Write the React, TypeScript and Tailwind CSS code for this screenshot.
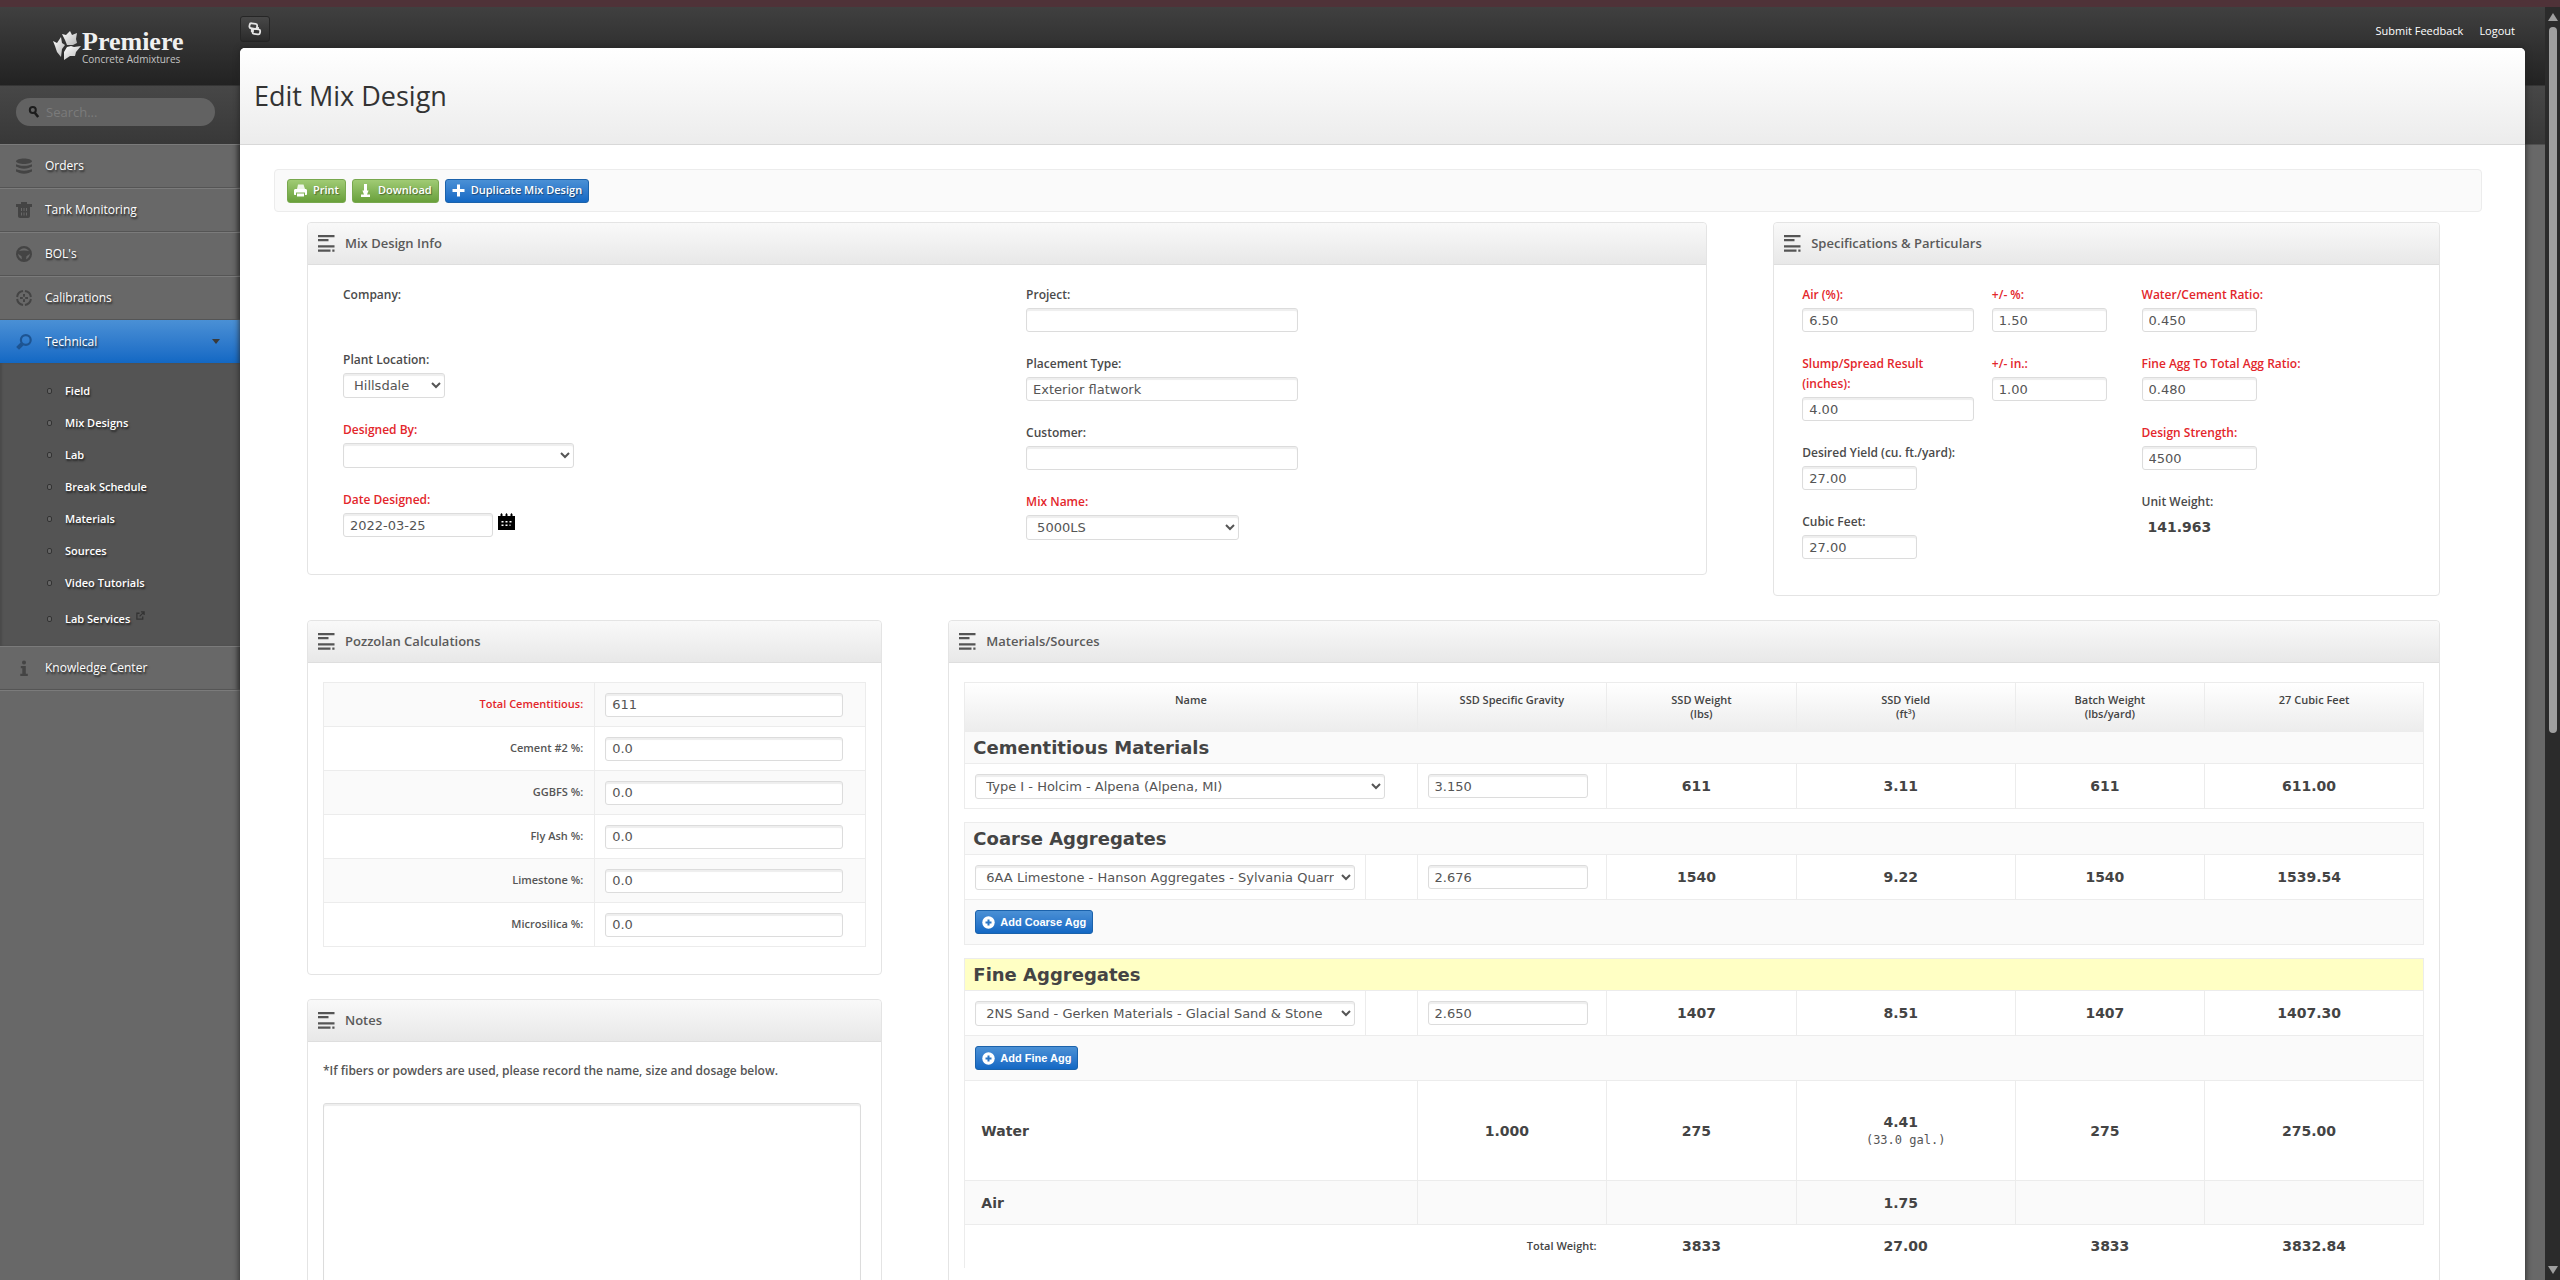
import { useId, type ReactNode } from "react";
import clsx from "clsx";

const field =
  "rounded-[3px] border border-[#dcdcdc] bg-white font-['DejaVu_Sans',Verdana,sans-serif] text-[13px] leading-4 text-[#555] shadow-[inset_0_2px_1px_#eee] outline-none focus:border-[#8ab4e0]";

/* ---------- icons ---------- */

function StackIcon() {
  return (
    <svg viewBox="0 0 16 16" className="h-4 w-4" fill="currentColor">
      <path d="M8 .5c4 0 8 1.200 8 2.700S12 6 8 6 0 4.700 0 3.200 4 .5 8 .5z" />
      <path d="M0 6.300l3 .9c3 .8 7 .8 10 0l3-.9v2.200l-3.500 1.600c-2.800.9-6.200.9-9 0L0 8.500z" />
      <path d="M0 11.200l3 .9c3 .8 7 .8 10 0l3-.9v2.200l-3.500 1.600c-2.800.9-6.200.9-9 0L0 13.400z" />
    </svg>
  );
}

function TankIcon() {
  return (
    <svg viewBox="0 0 16 16" className="h-4 w-4" fill="currentColor" fillRule="evenodd">
      <path d="M5 0h6v2h5v3h-2v9c0 1.200-.8 2-2 2H4c-1.200 0-2-.8-2-2V5H0V2h5zM5 6v3h1V6zm2.500 0v3h1V6zM10 6v3h1V6zM5 10.500v3h1v-3zm2.500 0v3h1v-3zm2.500 0v3h1v-3z" />
    </svg>
  );
}

function WheelIcon() {
  return (
    <svg viewBox="0 0 16 16" className="h-4 w-4" fill="none" stroke="currentColor">
      <circle cx="8" cy="8" r="6.900" strokeWidth="2.200" />
      <path d="M1.500 5.500c4-1.500 9-1.500 13 0l-.8 2.500-3.200 2.200L9.800 15H6.200l-.7-4.800L2.300 8z" fill="currentColor" stroke="none" />
    </svg>
  );
}

function TargetIcon() {
  return (
    <svg viewBox="0 0 16 16" className="h-4 w-4" fill="none" stroke="currentColor">
      <path
        d="M9 1.100a7 7 0 0 1 5.900 5.900M14.900 9a7 7 0 0 1-5.900 5.900M7 14.900a7 7 0 0 1-5.900-5.900M1.100 7a7 7 0 0 1 5.900-5.900"
        strokeWidth="2"
      />
      <path d="M8 4v2.800M8 9.200V12M4 8h2.800M9.200 8H12" strokeWidth="2" />
    </svg>
  );
}

function LensIcon() {
  return (
    <svg viewBox="0 0 16 16" className="h-4 w-4" fill="none" stroke="currentColor">
      <circle cx="9.800" cy="6" r="4.900" strokeWidth="2.200" />
      <path d="M6 10l-4.400 4.400" strokeWidth="4" />
    </svg>
  );
}

function InfoIcon() {
  return (
    <svg viewBox="0 0 16 16" className="h-4 w-4" fill="currentColor">
      <circle cx="8" cy="2.500" r="2" />
      <path d="M4.800 6h5v7.800h2V16H4.300v-2.200h2V8.200H4.800z" />
    </svg>
  );
}

function SearchIcon() {
  return (
    <svg viewBox="0 0 12 12" className="h-3 w-3" fill="none" stroke="#1c1c1c">
      <circle cx="4.800" cy="4" r="3" strokeWidth="2" />
      <path d="M6.800 6.800l3.400 4.200" strokeWidth="2.600" />
    </svg>
  );
}

function LinesIcon() {
  return (
    <svg viewBox="0 0 17 17" className="h-[17px] w-[17px]" fill="#555">
      <path d="M0 0h16.500v2.200H0zM0 4h10.500v2.200H0zM0 10.200h16.500v2.200H0zM0 14.500h12.500v2.200H0zM14.300 14.500h2.200v2.200h-2.200z" />
    </svg>
  );
}

function CalendarIcon() {
  return (
    <svg viewBox="0 0 17 17" className="h-[17px] w-[17px]" fillRule="evenodd">
      <path d="M0 3h2.500V1.200L3.500 0l1 1.200V3h3V1.200L8.500 0l1 1.200V3h3V1.200L13.500 0l1 1.200V3H17v14H0zM3.500 8v1.500h2V8zm4 0v1.500h2V8zm4 0v1.500h2V8zm-8 3.500V13h2v-1.500zm4 0V13h2v-1.500zm4 0V13h1v-1.500z" />
    </svg>
  );
}

function PrintIcon() {
  return (
    <svg viewBox="0 0 13 13" className="h-[13px] w-[13px]" fill="currentColor">
      <path d="M3 5l1-4.500h5.500L11 5z" fillOpacity=".85" />
      <path d="M1.500 5h10c.8 0 1.500.6 1.500 1.400V10c0 .6-.4 1-1 1h-1V8.500H2V11H1c-.6 0-1-.4-1-1V6.400C0 5.600.7 5 1.500 5z" />
      <path d="M3 9.500h7v3H3z" />
    </svg>
  );
}

function DownloadIcon() {
  return (
    <svg viewBox="0 0 13 13" className="h-[13px] w-[13px]" fill="currentColor">
      <path d="M5 0h3v6.500h1.600L8 10.500h3V13H2v-2.500h3L3.400 6.500H5z" />
    </svg>
  );
}

function PlusIcon() {
  return (
    <svg viewBox="0 0 13 13" className="h-[13px] w-[13px]" fill="currentColor">
      <path d="M5 .5h3V5h4.500v3H8v4.500H5V8H.5V5H5z" />
    </svg>
  );
}

function PlusCircleIcon() {
  return (
    <svg viewBox="0 0 13 13" className="h-[13px] w-[13px]">
      <circle cx="6.500" cy="6.500" r="6.200" fill="currentColor" />
      <path d="M6.500 3.500v6M3.500 6.500h6" stroke="#2a75c4" strokeWidth="2" />
    </svg>
  );
}

function ChainIcon() {
  return (
    <svg viewBox="0 0 14 14" className="h-[14px] w-[14px]" fill="none" stroke="#e4e4e4" strokeWidth="1.800">
      <rect x="1.500" y="1.500" width="7.600" height="5" rx="1.800" transform="rotate(8 5 4)" />
      <rect x="4.600" y="7.200" width="7.600" height="5" rx="1.800" transform="rotate(8 9 9)" />
      <path d="M3.800 6v3h2M10 5v3" />
    </svg>
  );
}

function ExternalIcon() {
  return (
    <svg viewBox="0 0 10 10" className="h-[9px] w-[9px]" fill="none" stroke="#333" strokeWidth="1.400">
      <path d="M4 2.500H1v6.500h6.500V6" />
      <path d="M4 6l4.500-4.500M5.500 1H9v3.500" />
    </svg>
  );
}

function Logo() {
  return (
    <a href="#" className="flex h-[78px] items-start gap-px pt-[23px] pl-[53px] text-[#f0f0f0]">
      <svg viewBox="0 0 28 32" className="h-8 w-7">
        <defs>
          <linearGradient id="leaf" x1="0" y1="0" x2="1" y2="1">
            <stop offset="0" stopColor="#fff" />
            <stop offset="1" stopColor="#b5b5b5" />
          </linearGradient>
        </defs>
        <g fill="url(#leaf)">
          <path d="M9 4l4 1 4-4 2 4 5-2-1 6 1 4-4 2-6 0-2-5z" />
          <path d="M0 11l4 2 4-6 1 6 3 2-3 4-1 8-4-5-2-6z" />
          <path d="M14 17l4-1 3 1 7-1-5 6-1 4-5 0-6 4 0-8z" />
        </g>
      </svg>
      <span className="flex flex-col">
        <span className="font-['Liberation_Serif',serif] text-[26px] leading-6 font-bold">Premiere</span>
        <span className="text-[10px] leading-[10px] text-[#c4c4c4]">Concrete Admixtures</span>
      </span>
    </a>
  );
}

/* ---------- sidebar ---------- */

const mainNav = [
  { label: "Orders", icon: <StackIcon /> },
  { label: "Tank Monitoring", icon: <TankIcon /> },
  { label: "BOL's", icon: <WheelIcon /> },
  { label: "Calibrations", icon: <TargetIcon /> },
];

const technicalNav = ["Field", "Mix Designs", "Lab", "Break Schedule", "Materials", "Sources", "Video Tutorials"];

const navText = "text-xs font-medium text-white [text-shadow:1px_2px_2px_#222]";

function NavItem({ label, icon }: { label: string; icon: ReactNode }) {
  return (
    <a href="#" className="flex h-11 items-center gap-[13px] border-t border-b border-t-[#7b7b7b] border-b-[#555] pl-4 text-[#444]">
      {icon}
      <span className={navText}>{label}</span>
    </a>
  );
}

function SubItem({ label, external = false }: { label: string; external?: boolean }) {
  return (
    <a
      href="#"
      className={clsx(
        "flex items-center gap-[13px] pl-[47px] text-[11px] font-semibold text-white [text-shadow:1px_2px_2px_#222]",
        external ? "h-10" : "h-8",
      )}
    >
      <span className="h-[6px] w-[5px] rounded-[2px] border border-[#333] bg-[#666]" />
      <span className="flex gap-[6px]">
        {label}
        {external && <ExternalIcon />}
      </span>
    </a>
  );
}

function Sidebar() {
  return (
    <aside className="w-60 shrink-0">
      <Logo />
      <div className="h-[59px] px-4 pt-[13px]">
        <div className="relative mr-[9px]">
          <span className="absolute top-2 left-3">
            <SearchIcon />
          </span>
          <input
            type="text"
            aria-label="Search"
            placeholder="Search..."
            className="h-7 w-full rounded-full bg-[#626262] pl-[30px] text-[13px] text-white outline-none placeholder:text-[#7b7b7b]"
          />
        </div>
      </div>
      <nav className="shadow-[inset_-6px_0_6px_-5px_#333]">
        {mainNav.map((item) => (
          <NavItem key={item.label} {...item} />
        ))}
        <a href="#" className="flex h-[43px] items-center gap-[13px] bg-linear-to-b from-[#4a90d5] to-[#1268c4] pl-4 text-[#1d5492]">
          <LensIcon />
          <span className={navText}>Technical</span>
          <svg viewBox="0 0 8 5" className="mr-5 ml-auto h-[5px] w-2" fill="#3a3a3a">
            <path d="M0 0h8L4 5z" />
          </svg>
        </a>
        <div className="bg-[#545454] pt-3 pb-[7px] shadow-[inset_2px_0_2px_#4a4a4a]">
          {technicalNav.map((label) => (
            <SubItem key={label} label={label} />
          ))}
          <SubItem label="Lab Services" external />
        </div>
        <NavItem label="Knowledge Center" icon={<InfoIcon />} />
        <div className="border-t border-[#7b7b7b]" />
      </nav>
    </aside>
  );
}

/* ---------- form pieces ---------- */

function Panel({ title, children }: { title: string; children: ReactNode }) {
  return (
    <section className="rounded-[4px] border border-[#e4e4e4] bg-white">
      <h2 className="flex h-[42px] items-center gap-[10px] rounded-t-[4px] border-b border-[#dedede] bg-linear-to-b from-[#f9f9f9] to-[#e8e8e8] pl-[10px] text-[13px] font-semibold text-[#5a5a5a]">
        <LinesIcon />
        {title}
      </h2>
      {children}
    </section>
  );
}

type FieldProps = { label: string; value?: string; width?: string; required?: boolean; after?: ReactNode };

function FieldLabel({ id, label, required }: { id: string; label: string; required?: boolean }) {
  return (
    <label htmlFor={id} className={clsx("text-xs leading-5 font-semibold", required ? "text-[#e3262b]" : "text-[#4a4a4a]")}>
      {label}
    </label>
  );
}

function TextField({ label, value = "", width = "w-[115px]", required, after }: FieldProps) {
  const id = useId();
  return (
    <div className="flex flex-col gap-[3px]">
      <FieldLabel id={id} label={label} required={required} />
      <div className="flex gap-[5px]">
        <input id={id} type="text" defaultValue={value} className={clsx(field, "h-6 px-[6px]", width)} />
        {after}
      </div>
    </div>
  );
}

function SelectField({ label, value = "", width, required }: FieldProps) {
  const id = useId();
  return (
    <div className="flex flex-col gap-[3px]">
      <FieldLabel id={id} label={label} required={required} />
      <select id={id} defaultValue={value} className={clsx(field, "h-[25px] pl-[6px]", width)}>
        <option>{value}</option>
      </select>
    </div>
  );
}

function MixDesignInfo() {
  return (
    <Panel title="Mix Design Info">
      <div className="grid grid-cols-2 gap-x-[38px] px-[35px] pt-5 pb-[34px]">
        <div className="flex flex-col gap-[22px]">
          <div className="h-[43px] text-xs leading-5 font-semibold text-[#4a4a4a]">Company:</div>
          <SelectField label="Plant Location:" value="Hillsdale" width="w-[102px]" />
          <SelectField label="Designed By:" width="w-[231px]" required />
          <TextField label="Date Designed:" value="2022-03-25" width="w-[150px]" required after={<CalendarIcon />} />
        </div>
        <div className="flex flex-col gap-[22px]">
          <TextField label="Project:" width="w-[272px]" />
          <TextField label="Placement Type:" value="Exterior flatwork" width="w-[272px]" />
          <TextField label="Customer:" width="w-[272px]" />
          <SelectField label="Mix Name:" value="5000LS" width="w-[213px]" required />
        </div>
      </div>
    </Panel>
  );
}

function Specifications() {
  return (
    <Panel title="Specifications & Particulars">
      <div className="grid grid-cols-[19fr_15fr_28fr] pt-5 pr-[18px] pb-9 pl-7">
        <div className="flex flex-col gap-[22px] pr-[18px]">
          <TextField label="Air (%):" value="6.50" width="w-full" required />
          <TextField label="Slump/Spread Result (inches):" value="4.00" width="w-full" required />
          <TextField label="Desired Yield (cu. ft./yard):" value="27.00" />
          <TextField label="Cubic Feet:" value="27.00" />
        </div>
        <div className="flex flex-col gap-[22px]">
          <TextField label="+/- %:" value="1.50" required />
          <TextField label="+/- in.:" value="1.00" required />
        </div>
        <div className="flex flex-col gap-[22px]">
          <TextField label="Water/Cement Ratio:" value="0.450" required />
          <TextField label="Fine Agg To Total Agg Ratio:" value="0.480" required />
          <TextField label="Design Strength:" value="4500" required />
          <div className="flex flex-col gap-[5px] text-[#444]">
            <span className="text-xs leading-5 font-semibold text-[#4a4a4a]">Unit Weight:</span>
            <span className="pl-[6px] font-['DejaVu_Sans',Verdana,sans-serif] text-sm font-bold">141.963</span>
          </div>
        </div>
      </div>
    </Panel>
  );
}

const pozzolans = [
  { label: "Total Cementitious:", value: "611", required: true },
  { label: "Cement #2 %:", value: "0.0" },
  { label: "GGBFS %:", value: "0.0" },
  { label: "Fly Ash %:", value: "0.0" },
  { label: "Limestone %:", value: "0.0" },
  { label: "Microsilica %:", value: "0.0" },
];

function Pozzolan() {
  const id = useId();
  return (
    <Panel title="Pozzolan Calculations">
      <div className="px-[15px] pt-[19px] pb-[27px]">
        <table className="w-full table-fixed border-collapse">
          <tbody>
            {pozzolans.map((row, i) => (
              <tr key={row.label} className="h-11 border border-[#ececec] odd:bg-[#fafafa]">
                <th scope="row" className="border-r border-[#ececec] pr-[11px] text-right text-[11px] font-semibold">
                  <label htmlFor={`${id}-${i}`} className={row.required ? "text-[#e3262b]" : "text-[#555]"}>
                    {row.label}
                  </label>
                </th>
                <td className="px-[10px]">
                  <input id={`${id}-${i}`} type="text" defaultValue={row.value} className={clsx(field, "block h-6 w-[95%] px-[6px]")} />
                </td>
              </tr>
            ))}
          </tbody>
        </table>
      </div>
    </Panel>
  );
}

function Notes() {
  return (
    <Panel title="Notes">
      <div className="px-[15px] pt-[19px] pb-7">
        <label htmlFor="notes" className="block text-xs leading-5 font-semibold text-[#555]">
          *If fibers or powders are used, please record the name, size and dosage below.
        </label>
        <textarea id="notes" rows={14} className={clsx(field, "mt-[22px] block w-[99%] p-2")} />
      </div>
    </Panel>
  );
}

/* ---------- materials table ---------- */

const cell = "border border-[#ececec] px-[10px]";
const bold = "font-['DejaVu_Sans',Verdana,sans-serif] text-sm font-bold text-[#444]";

function Num({ children }: { children?: ReactNode }) {
  return <td className={clsx(cell, bold, "pr-5 text-center")}>{children}</td>;
}

function GroupHeading({ children, highlight = false }: { children: ReactNode; highlight?: boolean }) {
  return (
    <tr className={clsx("h-8", highlight ? "bg-[#ffffc4]" : "bg-[#fafafa]")}>
      <th
        scope="colgroup"
        colSpan={7}
        className="border border-[#ececec] px-2 text-left font-['DejaVu_Sans',Verdana,sans-serif] text-lg leading-6 text-[#444]"
      >
        {children}
      </th>
    </tr>
  );
}

function Spacer() {
  return (
    <tr className="h-[14px]">
      <td colSpan={7} />
    </tr>
  );
}

type MaterialProps = { name: string; gravity: string; numbers: string[]; removable?: boolean };

function MaterialRow({ name, gravity, numbers, removable }: MaterialProps) {
  return (
    <tr className="h-[45px]">
      <td className={cell} colSpan={removable ? 1 : 2}>
        <select
          aria-label="Material"
          defaultValue={name}
          className={clsx(field, "block h-[25px] pr-1 pl-[6px]", removable ? "w-full" : "w-[95%]")}
        >
          <option>{name}</option>
        </select>
      </td>
      {removable && <td className={cell} />}
      <td className={cell}>
        <input type="text" aria-label="SSD Specific Gravity" defaultValue={gravity} className={clsx(field, "block h-6 w-[95%] px-[6px]")} />
      </td>
      {numbers.map((n, i) => (
        <Num key={i}>{n}</Num>
      ))}
    </tr>
  );
}

function AddRow({ label }: { label: string }) {
  return (
    <tr className="h-[45px] bg-[#fafafa]">
      <td className={cell} colSpan={7}>
        <button
          type="button"
          className="flex h-6 items-center gap-[5px] rounded-[3px] border border-[#1b62ab] bg-linear-to-b from-[#4a90d5] to-[#1268c4] px-[6px] font-['Liberation_Sans',Arial,sans-serif] text-[11px] font-bold text-white"
        >
          <PlusCircleIcon />
          {label}
        </button>
      </td>
    </tr>
  );
}

const headings: [string, string?][] = [
  ["SSD Specific Gravity"],
  ["SSD Weight", "(lbs)"],
  ["SSD Yield", "(ft³)"],
  ["Batch Weight", "(lbs/yard)"],
  ["27 Cubic Feet"],
];

function Materials() {
  return (
    <Panel title="Materials/Sources">
      <div className="px-[15px] pt-[19px] pb-7">
        <table className="w-full table-fixed border-collapse">
          <colgroup>
            <col className="w-[27.5%]" />
            <col className="w-[3.5%]" />
            <col className="w-[13%]" />
            <col className="w-[13%]" />
            <col className="w-[15%]" />
            <col className="w-[13%]" />
            <col className="w-[15%]" />
          </colgroup>
          <thead>
            <tr className="h-[49px] bg-linear-to-b from-white to-[#ececec] text-[11px] leading-[14px] text-[#444]">
              <th colSpan={2} className="border border-[#ececec] pt-[10px] align-top font-semibold">
                Name
              </th>
              {headings.map(([top, bottom]) => (
                <th key={top} className="border border-[#ececec] pt-[10px] align-top font-semibold">
                  {top}
                  {bottom && <div>{bottom}</div>}
                </th>
              ))}
            </tr>
          </thead>
          <tbody>
            <GroupHeading>Cementitious Materials</GroupHeading>
            <MaterialRow name="Type I - Holcim - Alpena (Alpena, MI)" gravity="3.150" numbers={["611", "3.11", "611", "611.00"]} />
            <Spacer />
            <GroupHeading>Coarse Aggregates</GroupHeading>
            <MaterialRow
              name="6AA Limestone - Hanson Aggregates - Sylvania Quarry"
              gravity="2.676"
              numbers={["1540", "9.22", "1540", "1539.54"]}
              removable
            />
            <AddRow label="Add Coarse Agg" />
            <Spacer />
            <GroupHeading highlight>Fine Aggregates</GroupHeading>
            <MaterialRow
              name="2NS Sand - Gerken Materials - Glacial Sand & Stone"
              gravity="2.650"
              numbers={["1407", "8.51", "1407", "1407.30"]}
              removable
            />
            <AddRow label="Add Fine Agg" />
            <tr className="h-[100px]">
              <td colSpan={2} className={clsx(cell, bold, "pl-4")}>
                Water
              </td>
              <Num>1.000</Num>
              <Num>275</Num>
              <td className={cell}>
                <div className={clsx(bold, "pr-[10px] text-center leading-[18px]")}>4.41</div>
                <div className="text-center font-['DejaVu_Sans_Mono',monospace] text-xs leading-[18px] text-[#555]">(33.0 gal.)</div>
              </td>
              <Num>275</Num>
              <Num>275.00</Num>
            </tr>
            <tr className="h-11 bg-[#fafafa]">
              <td colSpan={2} className={clsx(cell, bold, "pl-4")}>
                Air
              </td>
              <Num />
              <Num />
              <Num>1.75</Num>
              <Num />
              <Num />
            </tr>
            <tr className="h-[43px]">
              <td colSpan={3} className="border-l border-[#ececec] pr-[10px] text-right text-[11px] font-semibold text-[#444]">
                Total Weight:
              </td>
              {["3833", "27.00", "3833", "3832.84"].map((n, i) => (
                <td key={i} className={clsx(bold, "text-center")}>
                  {n}
                </td>
              ))}
            </tr>
          </tbody>
        </table>
      </div>
    </Panel>
  );
}

/* ---------- page ---------- */

function ActionButton({ icon, children, blue = false }: { icon: ReactNode; children: ReactNode; blue?: boolean }) {
  return (
    <button
      type="button"
      className={clsx(
        "flex h-6 items-center gap-[6px] rounded-[3px] border bg-linear-to-b px-[6px] text-[11px] font-semibold text-white [text-shadow:1px_1px_1px_#0006]",
        blue ? "border-[#1b62ab] from-[#4a90d5] to-[#1268c4]" : "border-[#78a84e] from-[#a0cb74] to-[#69a03a]",
      )}
    >
      {icon}
      {children}
    </button>
  );
}

export default function App() {
  return (
    <div className="flex h-screen flex-col overflow-hidden font-['Open_Sans',sans-serif]">
      <div className="h-[7px] shrink-0 bg-[#4f3238]" />
      <div className="flex min-h-0 flex-1">
        <div className="flex min-w-0 flex-1 overflow-hidden bg-[linear-gradient(#404040_0,#222_78px,#474747_79px,#383838_137px,#686868_138px)]">
          <Sidebar />
          <div className="mr-5 flex min-w-0 flex-1 flex-col">
            <header className="flex h-[41px] shrink-0 items-start justify-between pt-[9px]">
              <button
                type="button"
                aria-label="Links"
                className="flex h-[26px] w-[30px] items-center justify-center rounded-[3px] border border-[#262626] bg-linear-to-b from-[#484848] to-[#2b2b2b]"
              >
                <ChainIcon />
              </button>
              <div className="flex gap-4 pt-[7px] pr-[10px] text-[11px] leading-4 font-medium text-white">
                <a href="#">Submit Feedback</a>
                <a href="#">Logout</a>
              </div>
            </header>
            <main className="shrink-0 rounded-t-[5px] bg-white shadow-[0_0_6px_#222]">
              <div className="flex h-[97px] items-center rounded-t-[5px] border-b border-[#d8d8d8] bg-linear-to-b from-white to-[#ececec] pl-[14px]">
                <h1 className="text-[27px] text-[#333]">Edit Mix Design</h1>
              </div>
              <div className="pt-6 pr-[43px] pb-10 pl-[34px]">
                <div className="flex h-[43px] items-center gap-[6px] rounded-[4px] border border-[#ececec] bg-[#fafafa] pl-3">
                  <ActionButton icon={<PrintIcon />}>Print</ActionButton>
                  <ActionButton icon={<DownloadIcon />}>Download</ActionButton>
                  <ActionButton icon={<PlusIcon />} blue>
                    Duplicate Mix Design
                  </ActionButton>
                </div>
                <div className="pt-[10px] pr-[42px] pl-[33px]">
                  <div className="grid grid-cols-[21fr_10fr] items-start gap-[66px]">
                    <MixDesignInfo />
                    <Specifications />
                  </div>
                  <div className="mt-6 grid grid-cols-[27fr_70fr] items-start gap-[66px]">
                    <div className="flex flex-col gap-6">
                      <Pozzolan />
                      <Notes />
                    </div>
                    <Materials />
                  </div>
                </div>
              </div>
            </main>
          </div>
        </div>
        {/* scroll track */}
        <div className="flex w-[15px] shrink-0 flex-col items-center bg-[#2b2b2b] py-[6px]">
          <svg viewBox="0 0 10 8" className="h-2 w-[10px]" fill="#9f9f9f">
            <path d="M5 0l5 8H0z" />
          </svg>
          <div className="mt-[6px] h-[56%] w-2 rounded-full bg-[#9f9f9f]" />
          <svg viewBox="0 0 10 8" className="mt-auto h-2 w-[10px]" fill="#9f9f9f">
            <path d="M5 8l5-8H0z" />
          </svg>
        </div>
      </div>
    </div>
  );
}
